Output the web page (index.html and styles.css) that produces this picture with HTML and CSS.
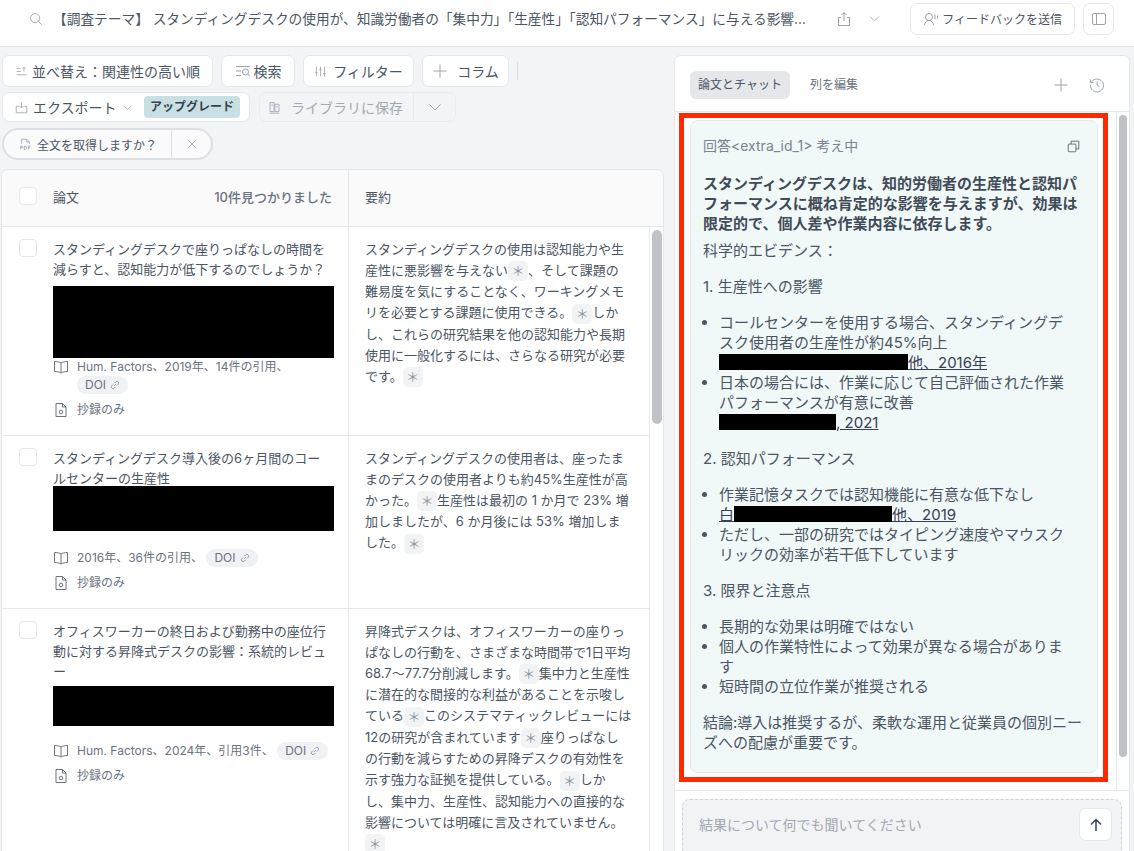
FILE: index.html
```html
<!DOCTYPE html>
<html lang="ja">
<head>
    <meta charset="UTF-8">
    <meta name="viewport" content="width=device-width, initial-scale=1.0">
    <title>スタンディングデスクの調査</title>
    <link rel="stylesheet" href="styles.css">
</head>
<body>

    <header class="topbar">
        <svg class="icon search-icon" viewBox="0 0 16 16"><circle cx="7" cy="7" r="5.2"/><path d="M11 11l3.5 3.5"/></svg>
        <div class="query">【調査テーマ】 スタンディングデスクの使用が、知識労働者の「集中力」「生産性」「認知パフォーマンス」に与える影響...</div>
        <svg class="icon share-icon" viewBox="0 0 16 16"><path d="M8 10V1.5M5.5 4L8 1.5 10.5 4M5 6.5H2.5v8h11v-8H11"/></svg>
        <svg class="icon chevron-icon" viewBox="0 0 16 16"><path d="M2.5 5.5L8 11l5.500-5.500"/></svg>
        <button class="btn feedback-btn">
            <svg class="icon" viewBox="0 0 16 16"><circle cx="6" cy="6" r="3.500"/><path d="M1.500 14c.5-3 2-4.500 4.500-4.500S10 11 10.500 14M12 3.500v5M14.500 4.500v3"/></svg>
            フィードバックを送信
        </button>
        <button class="btn panel-btn">
            <svg class="icon" viewBox="0 0 16 16"><rect x="1.500" y="2.500" width="13" height="11" rx="1.500"/><path d="M5.500 2.500v11"/></svg>
        </button>
    </header>

    <div class="workspace">
        <main class="results">
            <div class="toolbar">
                <button class="btn sort-btn">
                    <svg class="icon small" viewBox="0 0 16 16"><path d="M2 4.500h5M2 8h5M2 12h12M11 8V2.500M9 4.500l2-2 2 2"/></svg>
                    並べ替え：関連性の高い順
                </button>
                <button class="btn search-btn">
                    <svg class="icon" viewBox="0 0 16 16"><path d="M1 3.500h14M1 8h5M1 12.500h5"/><circle cx="10.500" cy="9" r="3"/><path d="M12.700 11.200L15 13"/></svg>
                    検索
                </button>
                <button class="btn filter-btn">
                    <svg class="icon small" viewBox="0 0 16 16"><path d="M3 2v12M8 2v12M13 2v12M1.500 9.500h3M6.500 5.500h3M11.500 10.500h3"/></svg>
                    フィルター
                </button>
                <button class="btn column-btn">
                    <svg class="icon plus-icon" viewBox="0 0 16 16"><path d="M8 1.500v13M1.500 8h13"/></svg>
                    コラム
                </button>
                <span class="toolbar-sep"></span>
            </div>
            <div class="toolbar">
                <button class="btn export-btn">
                    <svg class="icon small" viewBox="0 0 16 16"><path d="M8 1.500v7M5.500 6L8 8.500 10.500 6M4.500 6.500H1.500v8h13v-8h-3"/></svg>
                    エクスポート
                    <svg class="icon tiny" viewBox="0 0 16 16"><path d="M2.500 5.500L8 11l5.500-5.500"/></svg>
                    <span class="upgrade">アップグレード</span>
                </button>
                <div class="save-group">
                    <span class="save-label">
                        <svg class="icon small" viewBox="0 0 16 16"><path d="M2.500 2h5v11h-5zM8.500 4h5v9h-5zM2 15h12M4 5h2M10 7h2"/></svg>
                        ライブラリに保存
                    </span>
                    <span class="save-more">
                        <svg class="icon" viewBox="0 0 16 16"><path d="M2.500 5.500L8 11l5.500-5.500"/></svg>
                    </span>
                </div>
            </div>
            <div class="toolbar">
                <div class="fulltext">
                    <span class="fulltext-label">
                        <svg class="icon fulltext-icon" viewBox="0 0 16 16"><path d="M3 7V1.500h6.500L13 5v2M9.500 1.500V5H13M2 10v4M2 10h2v2H2M6.500 10v4h1.500l1-1v-2l-1-1zM11.500 14v-4H14M11.500 12H13.500"/></svg>
                        全文を取得しますか？
                    </span>
                    <span class="fulltext-close">
                        <svg class="icon" viewBox="0 0 16 16"><path d="M3 3l10 10M13 3L3 13"/></svg>
                    </span>
                </div>
            </div>

            <div class="table">
                <div class="row head-row">
                    <div class="cell paper-cell">
                        <span class="checkbox"></span>
                        <span class="head-title">論文</span>
                        <span class="found">10件見つかりました</span>
                    </div>
                    <div class="cell summary-cell">要約</div>
                </div>

                <div class="table-body">
                    <div class="rows">
                        <div class="row">
                            <div class="cell paper-cell">
                                <span class="checkbox"></span>
                                <div class="paper">
                                    <h4>スタンディングデスクで座りっぱなしの時間を減らすと、認知能力が低下するのでしょうか？</h4>
                                    <div class="redacted redacted-tall"></div>
                                    <div class="meta">
                                        <svg class="icon meta-icon" viewBox="0 0 16 16"><path d="M8 4C6.500 3 4 2.500 1.500 2.500v10c2.500 0 5 .5 6.500 1.500 1.500-1 4-1.500 6.500-1.500v-10C12 2.500 9.500 3 8 4zM8 4v10"/></svg>
                                        <p>Hum. Factors、2019年、14件の引用、 <span class="doi">DOI <svg class="icon link-icon" viewBox="0 0 16 16"><path d="M6.500 9.500l3-3M5 7L3 9a2.800 2.800 0 0 0 4 4l2-2M7 5l2-2a2.800 2.800 0 0 1 4 4l-2 2"/></svg></span></p>
                                    </div>
                                    <div class="meta abstract">
                                        <svg class="icon meta-icon" viewBox="0 0 16 16"><path d="M3 1.500h6.500L13 5v9.500H3zM9.500 1.500V5H13"/><circle cx="8" cy="10" r="1.800"/></svg>
                                        <p>抄録のみ</p>
                                    </div>
                                </div>
                            </div>
                            <div class="cell summary-cell">
                                スタンディングデスクの使用は認知能力や生産性に悪影響を与えない<span class="cite">＊</span>、そして課題の<br>難易度を気にすることなく、ワーキングメモリを必要とする課題に使用できる。<span class="cite">＊</span>しかし、これらの研究結果を他の認知能力や長期使用に一般化するには、さらなる研究が必要です。<span class="cite">＊</span>
                            </div>
                        </div>

                        <div class="row">
                            <div class="cell paper-cell">
                                <span class="checkbox"></span>
                                <div class="paper">
                                    <h4>スタンディングデスク導入後の6ヶ月間のコールセンターの生産性</h4>
                                    <div class="redacted redacted-overlap"></div>
                                    <div class="meta">
                                        <svg class="icon meta-icon" viewBox="0 0 16 16"><path d="M8 4C6.500 3 4 2.500 1.500 2.500v10c2.500 0 5 .5 6.500 1.500 1.500-1 4-1.500 6.500-1.500v-10C12 2.500 9.500 3 8 4zM8 4v10"/></svg>
                                        <p>2016年、36件の引用、 <span class="doi">DOI <svg class="icon link-icon" viewBox="0 0 16 16"><path d="M6.500 9.500l3-3M5 7L3 9a2.800 2.800 0 0 0 4 4l2-2M7 5l2-2a2.800 2.800 0 0 1 4 4l-2 2"/></svg></span></p>
                                    </div>
                                    <div class="meta abstract">
                                        <svg class="icon meta-icon" viewBox="0 0 16 16"><path d="M3 1.500h6.500L13 5v9.500H3zM9.500 1.500V5H13"/><circle cx="8" cy="10" r="1.800"/></svg>
                                        <p>抄録のみ</p>
                                    </div>
                                </div>
                            </div>
                            <div class="cell summary-cell">
                                スタンディングデスクの使用者は、座ったままのデスクの使用者よりも約45%生産性が高かった。<span class="cite">＊</span>生産性は最初の 1 か月で 23% 増加しましたが、6 か月後には 53% 増加しました。<span class="cite">＊</span>
                            </div>
                        </div>

                        <div class="row">
                            <div class="cell paper-cell">
                                <span class="checkbox"></span>
                                <div class="paper">
                                    <h4>オフィスワーカーの終日および勤務中の座位行動に対する昇降式デスクの影響：系統的レビュー</h4>
                                    <div class="redacted redacted-short"></div>
                                    <div class="meta">
                                        <svg class="icon meta-icon" viewBox="0 0 16 16"><path d="M8 4C6.500 3 4 2.500 1.500 2.500v10c2.500 0 5 .5 6.500 1.500 1.500-1 4-1.500 6.500-1.500v-10C12 2.500 9.500 3 8 4zM8 4v10"/></svg>
                                        <p>Hum. Factors、2024年、引用3件、 <span class="doi">DOI <svg class="icon link-icon" viewBox="0 0 16 16"><path d="M6.500 9.500l3-3M5 7L3 9a2.800 2.800 0 0 0 4 4l2-2M7 5l2-2a2.800 2.800 0 0 1 4 4l-2 2"/></svg></span></p>
                                    </div>
                                    <div class="meta abstract">
                                        <svg class="icon meta-icon" viewBox="0 0 16 16"><path d="M3 1.500h6.500L13 5v9.500H3zM9.500 1.500V5H13"/><circle cx="8" cy="10" r="1.800"/></svg>
                                        <p>抄録のみ</p>
                                    </div>
                                </div>
                            </div>
                            <div class="cell summary-cell">
                                昇降式デスクは、オフィスワーカーの座りっぱなしの行動を、さまざまな時間帯で1日平均68.7～77.7分削減します。<span class="cite">＊</span>集中力と生産性に潜在的な間接的な利益があることを示唆している<span class="cite">＊</span>このシステマティックレビューには12の研究が含まれています<span class="cite">＊</span>座りっぱなし<br>の行動を減らすための昇降デスクの有効性を示す強力な証拠を提供している。<span class="cite">＊</span>しか<br>し、集中力、生産性、認知能力への直接的な影響については明確に言及されていません。<span class="cite">＊</span>
                            </div>
                        </div>
                    </div>
                    <div class="scroll-track"><div class="scroll-thumb results-thumb"></div></div>
                </div>
            </div>
        </main>

        <aside class="chat">
            <div class="chat-tabs">
                <span class="tab active">論文とチャット</span>
                <span class="tab">列を編集</span>
                <svg class="icon chat-plus" viewBox="0 0 16 16"><path d="M8 1.500v13M1.500 8h13"/></svg>
                <svg class="icon" viewBox="0 0 16 16"><path d="M2.500 5A6.500 6.500 0 1 1 1.500 8M1.500 2.500V5.500h3M8 4.500V8l2.500 1.500"/></svg>
            </div>
            <div class="chat-body">
                <div class="chat-scroll">
                    <div class="highlight">
                        <div class="answer">
                            <div class="answer-head">
                                <span>回答&lt;extra_id_1&gt; 考え中</span>
                                <svg class="icon copy-icon" viewBox="0 0 16 16"><rect x="1.500" y="5" width="9.500" height="9.500" rx="1"/><path d="M5 5V1.500h9.500V11H11"/></svg>
                            </div>
                            <p class="lead">スタンディングデスクは、知的労働者の生産性と認知パフォーマンスに概ね肯定的な影響を与えますが、効果は限定的で、個人差や作業内容に依存します。</p>
                            <p class="evidence">科学的エビデンス：</p>
                            <p class="section">1. 生産性への影響</p>
                            <ul>
                                <li>コールセンターを使用する場合、スタンディングデスク使用者の生産性が約45%向上<br><a href="#"><span class="redact redact-a"></span>他、2016年</a></li>
                                <li>日本の場合には、作業に応じて自己評価された作業パフォーマンスが有意に改善<br><a href="#"><span class="redact redact-b"></span>, 2021</a></li>
                            </ul>
                            <p class="section">2. 認知パフォーマンス</p>
                            <ul>
                                <li>作業記憶タスクでは認知機能に有意な低下なし<br><a href="#">白<span class="redact redact-c"></span>他、2019</a></li>
                                <li>ただし、一部の研究ではタイピング速度やマウスクリックの効率が若干低下しています</li>
                            </ul>
                            <p class="section">3. 限界と注意点</p>
                            <ul>
                                <li>長期的な効果は明確ではない</li>
                                <li>個人の作業特性によって効果が異なる場合があります</li>
                                <li>短時間の立位作業が推奨される</li>
                            </ul>
                            <p class="section">結論:導入は推奨するが、柔軟な運用と従業員の個別ニーズへの配慮が重要です。</p>
                        </div>
                    </div>
                </div>
                <div class="scroll-track chat-track"><div class="scroll-thumb chat-thumb"></div></div>
            </div>
            <div class="chat-input-wrap">
                <div class="chat-input">
                    <span>結果について何でも聞いてください</span>
                    <button class="send">
                        <svg class="icon" viewBox="0 0 16 16"><path d="M8 14V2.500M3 7.500l5-5 5 5"/></svg>
                    </button>
                </div>
            </div>
        </aside>
    </div>

</body>
</html>
```

FILE: styles.css
```css
/* Reset CSS */
* {
    margin: 0;
    padding: 0;
    box-sizing: border-box;
}

html, body {
    height: 100%;
    overflow: hidden;
}

body {
    font-family: 'Inter', 'Noto Sans CJK JP', sans-serif;
    background-color: #f2f4f6;
    color: #374151;
    font-size: 14px;
    display: flex;
    flex-direction: column;
}

button {
    font-family: inherit;
}

.icon {
    width: 16px;
    height: 16px;
    flex: none;
    fill: none;
    stroke: #9ca3af;
    stroke-width: 1;
}

.icon.small {
    width: 13px;
    height: 13px;
}

.icon.tiny {
    width: 11px;
    height: 11px;
}

/* Barra superior */
.topbar {
    height: 47px;
    flex: none;
    background-color: #fff;
    border-bottom: 1px solid #e5e7eb;
    padding: 3px 20px 12px 29px;
    display: flex;
    align-items: center;
}

.search-icon {
    width: 14px;
    height: 14px;
    margin-right: 10px;
}

.query {
    width: 767px;
    font-size: 13.7px;
    white-space: nowrap;
    overflow: hidden;
    line-height: 20px;
    color: #4b5563;
}

.share-icon {
    margin-left: 18px;
}

.chevron-icon {
    margin-left: 16px;
    width: 13px;
    height: 13px;
}

.btn {
    height: 32px;
    padding: 0 12px;
    background-color: #fff;
    border: 1px solid #e5e7eb;
    border-radius: 7px;
    color: #4b5563;
    font-size: 14px;
    display: flex;
    align-items: center;
    justify-content: center;
    gap: 5px;
    white-space: nowrap;
}

.feedback-btn {
    margin-left: 29px;
    width: 165px;
    font-size: 12px;
    padding: 0 12px;
    gap: 3px;
    color: #4b5563;
}

.panel-btn {
    margin-left: 8px;
    width: 31px;
    padding: 0;
}

/* Resultados */
.workspace {
    flex: 1;
    min-height: 0;
    display: flex;
    padding-top: 8px;
}

.results {
    width: 666px;
    padding: 0 2px 0 1px;
    display: flex;
    flex-direction: column;
}

.toolbar {
    display: flex;
    align-items: center;
    gap: 8px;
    margin-bottom: 5px;
    padding-left: 1px;
}

.sort-btn {
    width: 211px;
    gap: 4px;
    justify-content: flex-start;
}

.search-btn {
    width: 74px;
    gap: 3px;
}

.filter-btn {
    width: 111px;
    gap: 6px;
}

.column-btn {
    width: 87px;
    gap: 9px;
}

.toolbar-sep {
    width: 1px;
    height: 18px;
    background-color: #d9dce1;
}

.export-btn {
    width: 248px;
    height: 30px;
    padding-right: 9px;
    justify-content: flex-start;
}

.upgrade {
    margin-left: auto;
    background-color: #c9e0e3;
    color: #374151;
    font-size: 12px;
    font-weight: 700;
    height: 22px;
    line-height: 22px;
    padding: 0 6px;
    border-radius: 4px;
}

.save-group {
    display: flex;
    height: 30px;
    width: 197px;
    margin-left: 1px;
    border: 1px solid #e9ebee;
    border-radius: 7px;
    color: #a3a9b3;
    background-color: #f3f4f6;
}

.save-label {
    flex: 1;
    display: flex;
    align-items: center;
    gap: 10px;
    padding-left: 8px;
    font-size: 14px;
    border-right: 1px solid #e9ebee;
}

.save-more {
    width: 41px;
    display: flex;
    align-items: center;
    justify-content: center;
}

.fulltext {
    display: flex;
    height: 32px;
    width: 211px;
    margin-top: 1px;
    border: 2px solid #dcdfe3;
    border-radius: 17px;
    background-color: #fafafa;
    font-size: 12px;
    color: #4b5563;
}

.fulltext-label {
    flex: 1;
    display: flex;
    align-items: center;
    gap: 5px;
    padding-left: 15px;
    border-right: 1px solid #dcdfe3;
}

.fulltext-icon {
    width: 13px;
    height: 13px;
}

.fulltext-close {
    width: 39px;
    display: flex;
    align-items: center;
    justify-content: center;
}

.fulltext-close .icon {
    width: 12px;
    height: 12px;
}

/* Tabla */
.table {
    flex: 1;
    min-height: 0;
    margin-top: 4px;
    display: flex;
    flex-direction: column;
    background-color: #fff;
    border: 1px solid #e5e7eb;
    border-bottom: none;
    border-radius: 7px 7px 0 0;
    overflow: hidden;
}

.row {
    display: flex;
    border-bottom: 1px solid #e5e7eb;
}

.head-row {
    height: 57px;
    flex: none;
    background-color: #fafafa;
    font-size: 13px;
    line-height: 20px;
    color: #4b5563;
}

.head-row .cell {
    padding-top: 17px;
    padding-bottom: 0;
}

.head-title {
    flex: 1;
}

.found {
    color: #6b7280;
    font-weight: 500;
}

.cell {
    padding: 12px 16px 16px;
}

.paper-cell {
    width: 347px;
    flex: none;
    display: flex;
    gap: 16px;
    border-right: 1px solid #e5e7eb;
}

.summary-cell {
    flex: 1;
    padding-top: 12px;
    padding-right: 16.5px;
    font-size: 13px;
    line-height: 21px;
    color: #4b5563;
}

.checkbox {
    width: 18px;
    height: 18px;
    flex: none;
    margin-left: 1px;
    background-color: #fff;
    border: 1px solid #e5e7eb;
    border-radius: 4px;
}

.paper {
    flex: 1;
    min-width: 0;
}

.paper h4 {
    font-size: 13px;
    font-weight: 400;
    line-height: 20px;
    color: #4b5563;
}

.redacted {
    background-color: #000;
    width: 281px;
}

.redacted-tall {
    height: 72px;
    margin-top: 7px;
}

.redacted-overlap {
    height: 45px;
    margin-top: -2px;
    margin-bottom: 18px;
}

.redacted-short {
    height: 40px;
    margin-top: 5px;
    margin-bottom: 16px;
}

.meta {
    display: flex;
    gap: 8px;
    font-size: 12px;
    line-height: 18px;
    color: #6b7280;
}

.meta-icon {
    width: 16px;
    height: 16px;
    margin-top: 1px;
    stroke: #6b7280;
}

.meta p {
    flex: 1;
}

.abstract {
    margin-top: 7px;
}

.doi {
    display: inline-flex;
    align-items: center;
    gap: 4px;
    height: 18px;
    padding: 0 8px;
    background-color: #f0f1f4;
    border-radius: 9px;
    vertical-align: top;
}

.link-icon {
    width: 10px;
    height: 10px;
    stroke: #6b7280;
}

.cite {
    display: inline-block;
    width: 20px;
    height: 20px;
    line-height: 20px;
    text-align: center;
    font-size: 13px;
    color: #8d95a0;
    background-color: #f2f3f5;
    border-radius: 5px;
    vertical-align: middle;
}

.table-body {
    flex: 1;
    min-height: 0;
    display: flex;
    overflow: hidden;
}

.rows {
    flex: 1;
    min-width: 0;
}

.scroll-track {
    width: 14px;
    flex: none;
    border-left: 1px solid #e5e7eb;
    padding: 3px 1px 0 2px;
}

.scroll-thumb {
    background-color: #bfc3c7;
    border-radius: 5px;
}

.results-thumb {
    height: 194px;
}

/* Panel de chat */
.chat {
    width: 456px;
    margin-left: 8px;
    display: flex;
    flex-direction: column;
    background-color: #fff;
    border: 1px solid #e5e7eb;
    border-bottom: none;
    border-radius: 7px 7px 0 0;
}

.chat-tabs {
    height: 56px;
    flex: none;
    padding: 3px 24px 0 15px;
    display: flex;
    align-items: center;
    border-bottom: 1px solid #e5e7eb;
    font-size: 12px;
}

.tab {
    height: 28px;
    line-height: 28px;
    padding: 0 0 0 20px;
    color: #6b7280;
    flex: none;
}

.tab.active {
    background-color: #e5e7eb;
    border-radius: 6px;
    padding: 0 8px;
    color: #4b5563;
}

.chat-plus {
    margin-left: auto;
    margin-right: 20px;
}

.chat-body {
    height: 679px;
    flex: none;
    display: flex;
    border-bottom: 1px solid #e5e7eb;
    overflow: hidden;
}

.chat-scroll {
    flex: 1;
    min-width: 0;
    padding: 1px 8px 0 4px;
}

.chat-track {
    width: 13px;
    padding: 3px 2px 0 2px;
}

.chat-thumb {
    height: 642px;
}

.highlight {
    border: 5px solid #ff2a00;
    padding: 2px 5px 4px 6px;
}

.answer {
    background-color: #f0f8f8;
    border: 1px solid #e5e9ea;
    border-radius: 8px;
    padding: 15px 12px 19px;
    font-size: 15px;
    line-height: 20px;
    color: #4b5563;
}

.answer-head {
    display: flex;
    justify-content: space-between;
    align-items: center;
    font-size: 14px;
    color: #7b8490;
    margin-bottom: 18px;
}

.copy-icon {
    width: 13px;
    height: 13px;
    margin-right: 5px;
    stroke: #4b5563;
}

.lead {
    font-weight: 700;
    color: #414a57;
    margin-bottom: 7px;
}

.section {
    margin: 16px 0;
}

.answer p:last-child {
    margin-bottom: 0;
}

ul {
    padding-left: 16px;
    padding-right: 8px;
}

.answer a {
    color: #374151;
}

.redact {
    display: inline-block;
    height: 16px;
    background-color: #000;
    vertical-align: -2px;
}

.redact-a { width: 189px; }
.redact-b { width: 117px; }
.redact-c { width: 158px; }

.chat-input-wrap {
    flex: 1;
    padding: 8px 7px 0;
}

.chat-input {
    height: 70px;
    padding: 8px 9px 0 16px;
    background-color: #f2f3f5;
    border: 1px dashed #cfd3d8;
    border-radius: 8px 8px 0 0;
    display: flex;
    justify-content: space-between;
    color: #a3a9b3;
    font-size: 14px;
}

.chat-input span {
    line-height: 33px;
}

.send {
    width: 33px;
    height: 33px;
    background-color: #fff;
    border: 1px solid #e5e7eb;
    border-radius: 7px;
    display: flex;
    align-items: center;
    justify-content: center;
}

.send .icon {
    stroke: #374151;
    stroke-width: 1.500;
}
```
